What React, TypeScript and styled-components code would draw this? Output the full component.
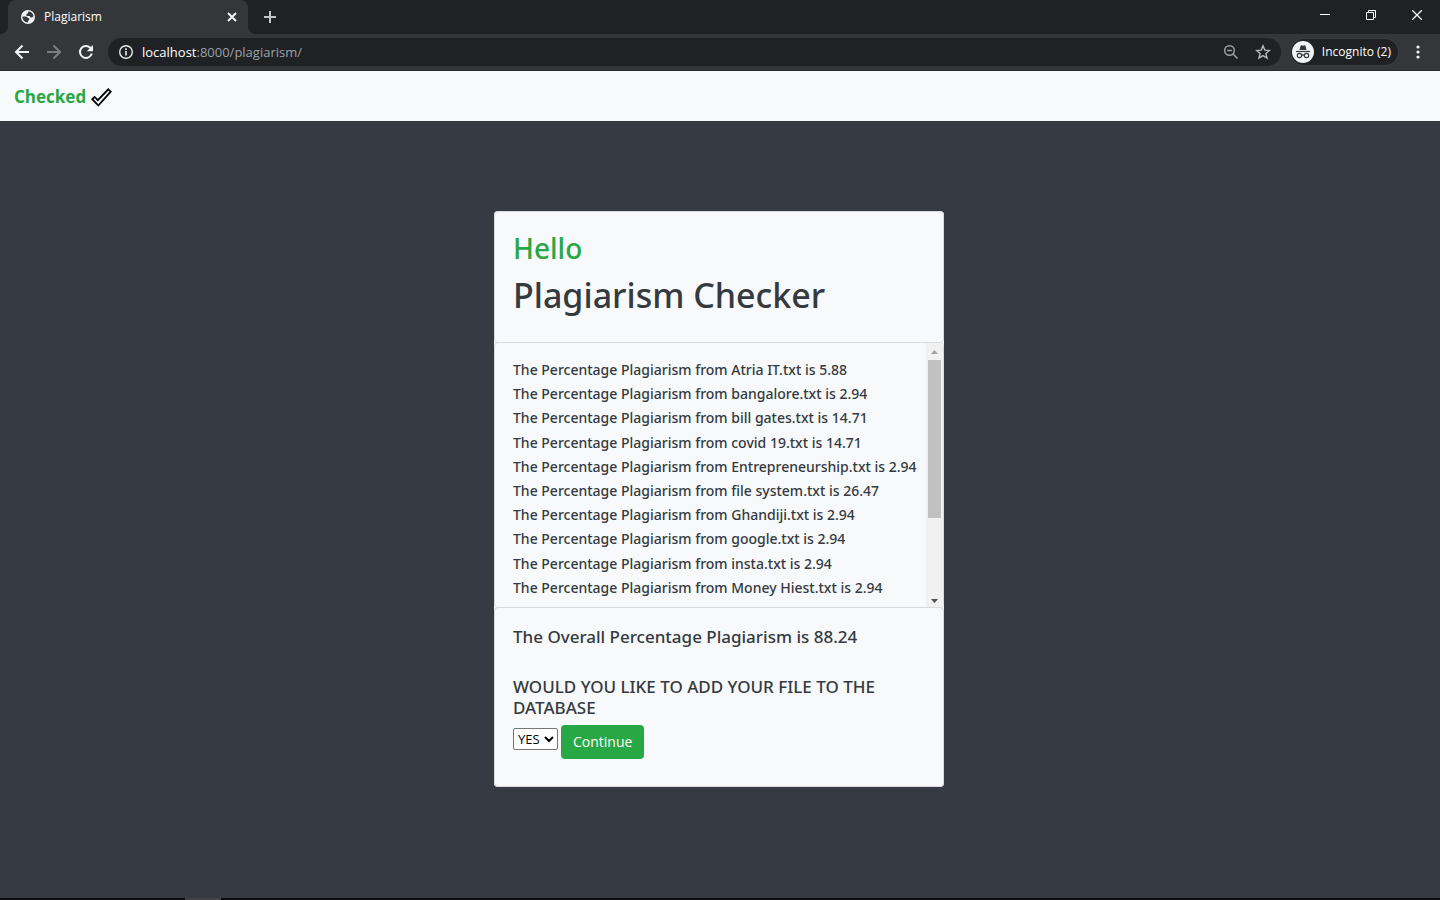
import React from "react";
import styled, { createGlobalStyle } from "styled-components";

const sans = `"Noto Sans", "Open Sans", sans-serif`;
const ui = `"Open Sans", "Noto Sans", sans-serif`;

const GlobalStyle = createGlobalStyle`
  *, *::before, *::after { box-sizing: border-box; }
  body { margin: 0; font-family: ${ui}; background: #363a43; }
  h1, h2, h3, ul { margin: 0; padding: 0; }
  button { font: inherit; color: inherit; border: 0; padding: 0; background: none; cursor: pointer; }
`;

const Window = styled.div`
  min-height: 100vh;
  display: flex;
  flex-direction: column;
`;

const TabStrip = styled.header`
  display: flex;
  align-items: flex-start;
  height: 34px;
  padding-left: 8px;
  background: #202124;
  color: #fff;
`;

const Tab = styled.div`
  position: relative;
  display: flex;
  align-items: center;
  gap: 8px;
  width: 240px;
  height: 34px;
  padding: 0 10px 0 12px;
  border-radius: 8px 8px 0 0;
  background: #35363a;
  font-size: 12px;
  line-height: 16px;

  &::before, &::after {
    content: "";
    position: absolute;
    bottom: 0;
    width: 8px;
    height: 8px;
  }
  &::before { right: 100%; background: radial-gradient(circle at 0 0, transparent 8px, #35363a 8px); }
  &::after { left: 100%; background: radial-gradient(circle at 100% 0, transparent 8px, #35363a 8px); }
`;

const TabTitle = styled.span`
  flex: 1;
`;

const IconButton = styled.button<{ $w: number; $h: number; $tone?: string }>`
  display: flex;
  flex: none;
  align-items: center;
  justify-content: center;
  width: ${(p) => p.$w}px;
  height: ${(p) => p.$h}px;
  color: ${(p) => p.$tone ?? "#f1f3f4"};
`;

const WindowControls = styled.div`
  display: flex;
  margin-left: auto;
`;

const Toolbar = styled.div`
  display: flex;
  align-items: center;
  height: 37px;
  padding: 0 6px;
  background: #35363a;
  border-bottom: 1px solid #28292c;
  color: #fff;
`;

const AddressBar = styled.div`
  display: flex;
  flex: 1;
  align-items: center;
  height: 28px;
  margin: 0 10px 0 6px;
  padding: 0 2px 0 10px;
  border-radius: 14px;
  background: #202124;
`;

const Url = styled.a`
  flex: 1;
  margin-left: 8px;
  color: #9aa0a6;
  font-size: 13px;
  line-height: 20px;
  text-decoration: none;
`;

const Host = styled.span`
  color: #fff;
`;

const Profile = styled.button`
  display: flex;
  align-items: center;
  gap: 8px;
  height: 26px;
  margin-right: 4px;
  padding: 0 7px 0 1px;
  border-radius: 13px;
  background: #202124;
  box-shadow: 0 0 0 1px #3c3d41;
  font-size: 12px;
  line-height: 16px;
  white-space: nowrap;
`;

const NavBar = styled.nav`
  display: flex;
  align-items: center;
  height: 50px;
  padding: 1px 14px 0;
  background: #f8f9fb;
`;

const Brand = styled.a`
  display: flex;
  align-items: center;
  gap: 5px;
  color: #28a745;
  font-size: 17px;
  font-weight: 700;
  line-height: 28px;
  text-decoration: none;
`;

const Main = styled.main`
  display: flex;
  flex: 1;
  align-items: flex-start;
  justify-content: center;
  padding: 90px 16px;
`;

const Card = styled.section`
  width: 450px;
  max-width: 100%;
  margin-right: 2px;
  border-radius: 4px;
  background: #f8f9fb;
  color: #343a40;
  font-family: ${sans};
`;

const Panel = styled.div`
  background: #f8f9fb;
  border: 1px solid #d8dadd;
  border-radius: 4px;

  & + & { margin-top: -1px; }
`;

const Heading = styled(Panel)`
  padding: 16px 18px 23px;
`;

const Greeting = styled.h2`
  color: #28a745;
  font-size: 28px;
  font-weight: 500;
  line-height: 40px;
`;

const Title = styled.h1`
  margin-top: 3px;
  font-size: 34px;
  font-weight: 500;
  line-height: 48px;
`;

const ResultPanel = styled(Panel)`
  display: flex;
  height: 266px;
  overflow: hidden;
`;

const Results = styled.ul`
  display: grid;
  flex: 1;
  grid-auto-rows: 1fr;
  align-items: center;
  height: 242px;
  margin: 15px 0 0 18px;
  list-style: none;
  font-size: 14px;
  font-weight: 500;
  line-height: 24px;
  white-space: nowrap;
`;

const ScrollBar = styled.div`
  display: flex;
  flex: none;
  flex-direction: column;
  align-items: center;
  width: 17px;
  background: #f1f1f1;
`;

const ScrollThumb = styled.div`
  width: 13px;
  height: 158px;
  margin-bottom: auto;
  background: #c1c1c1;
`;

const Footer = styled(Panel)`
  padding: 19px 18px 27px;
`;

const Overall = styled.h3`
  font-size: 17px;
  font-weight: 500;
  line-height: 20px;
`;

const Question = styled.label`
  display: block;
  margin: 29px 0 7px;
  font-size: 17px;
  font-weight: 500;
  line-height: 21px;
`;

const Controls = styled.form`
  display: flex;
  align-items: flex-start;
  gap: 3px;
`;

const Choice = styled.select`
  width: 45px;
  height: 22px;
  margin-top: 3px;
  padding: 0;
  border: 1px solid #767676;
  border-radius: 2px;
  background: #fff;
  color: #000;
  font-family: ${ui};
  font-size: 13px;
`;

const Continue = styled.button`
  height: 34px;
  padding: 0 12px;
  border-radius: 4px;
  background: #28a745;
  color: #fff;
  font-family: ${ui};
  font-size: 14px;
  line-height: 20px;
`;

const TaskBar = styled.footer`
  display: flex;
  height: 2px;
  padding-left: 185px;
  background: #0e0d0c;
`;

const TaskItem = styled.span`
  width: 36px;
  background: #444341;
`;

const rows: [string, string][] = [
  ["Atria IT.txt", "5.88"],
  ["bangalore.txt", "2.94"],
  ["bill gates.txt", "14.71"],
  ["covid 19.txt", "14.71"],
  ["Entrepreneurship.txt", "2.94"],
  ["file system.txt", "26.47"],
  ["Ghandiji.txt", "2.94"],
  ["google.txt", "2.94"],
  ["insta.txt", "2.94"],
  ["Money Hiest.txt", "2.94"],
];

const Stroke = ({ d, size = 16, width = 2 }: { d: string; size?: number; width?: number }) => (
  <svg width={size} height={size} viewBox={`0 0 ${size} ${size}`} fill="none" stroke="currentColor" strokeWidth={width}>
    <path d={d} />
  </svg>
);

const Globe = () => (
  <svg width="16" height="16" viewBox="0 0 16 16">
    <circle cx="8" cy="8" r="7" fill="#f1f3f4" />
    <path
      d="M2.500 7.600C4.500 7.300 6.700 7.300 7.600 8.600c.5.8 1.900.6 1.800 1.700-.1 1-1.400.8-1.400 3.200C4.700 13.500 2.300 11 2.500 7.600zM8.300 2.500c2.300-.2 4.600 1.600 5.100 4.200-.3 1.500-1.400 2.200-2.800 1.700-.6-.3-.5-1.200-1.300-1.300-1.200-.1-2.200.1-2.900-.7-.5-.8.2-1.700 1.200-1.800.8-.1.100-1.200.7-2.100z"
      fill="#35363a"
    />
  </svg>
);

const Incognito = () => (
  <svg width="22" height="22" viewBox="0 0 22 22">
    <circle cx="11" cy="11" r="11" fill="#f1f3f4" />
    <path d="M7.500 9 8.600 4.700q.2-.6.8-.4L11 4.700l1.600-.4q.6-.2.8.4L14.500 9z" fill="#35363a" />
    <path d="M4 10.500h14" stroke="#35363a" strokeWidth="1.200" />
    <g fill="none" stroke="#35363a" strokeWidth="1.200">
      <circle cx="7.500" cy="14.500" r="2.200" />
      <circle cx="14.500" cy="14.500" r="2.200" />
      <path d="M9.700 14.200q1.300-.8 2.600 0" />
    </g>
  </svg>
);

export default function App() {
  return (
    <Window>
      <GlobalStyle />
      <TabStrip>
        <Tab>
          <Globe />
          <TabTitle>Plagiarism</TabTitle>
          <IconButton $w={12} $h={16} aria-label="Close tab">
            <Stroke size={10} d="M1 1l8 8M9 1L1 9" />
          </IconButton>
        </Tab>
        <IconButton $w={44} $h={34} $tone="#c4c6ca" aria-label="New tab">
          <Stroke size={12} d="M6 0v12M0 6h12" />
        </IconButton>
        <WindowControls>
          <IconButton $w={46} $h={29} $tone="#fff" aria-label="Minimize">
            <Stroke size={10} width={1} d="M0 4.500h10" />
          </IconButton>
          <IconButton $w={46} $h={29} $tone="#fff" aria-label="Restore">
            <Stroke size={10} width={1} d="M.5 2.500h7v7h-7zM2.500 2.500v-2h7v7h-2" />
          </IconButton>
          <IconButton $w={46} $h={29} $tone="#fff" aria-label="Close window">
            <Stroke size={10} width={1.3} d="M0 0l10 10M10 0L0 10" />
          </IconButton>
        </WindowControls>
      </TabStrip>
      <Toolbar>
        <IconButton $w={32} $h={32} aria-label="Back">
          <Stroke d="M15 8H2M8.500 1.500L2 8l6.500 6.500" />
        </IconButton>
        <IconButton $w={32} $h={32} $tone="#7c7d80" aria-label="Forward">
          <Stroke d="M1 8h13M7.500 1.500L14 8l-6.500 6.500" />
        </IconButton>
        <IconButton $w={32} $h={32} aria-label="Reload">
          <svg width="16" height="16" viewBox="0 0 16 16">
            <path d="M13.800 9.500A6 6 0 1 1 12.300 3.700L13 4.400" fill="none" stroke="currentColor" strokeWidth="2" />
            <path d="M15 1v6.200H8.800z" fill="currentColor" />
          </svg>
        </IconButton>
        <AddressBar>
          <svg width="16" height="16" viewBox="0 0 16 16" fill="none" stroke="#e8eaed">
            <circle cx="8" cy="8" r="6.300" strokeWidth="1.400" />
            <path d="M8 7v4.500M8 4.300v1.700" strokeWidth="1.600" />
          </svg>
          <Url href="http://localhost:8000/plagiarism/">
            <Host>localhost</Host>:8000/plagiarism/
          </Url>
          <IconButton $w={32} $h={28} $tone="#9aa0a6" aria-label="Zoom">
            <svg width="16" height="16" viewBox="0 0 16 16" fill="none" stroke="currentColor" strokeWidth="1.500">
              <circle cx="6.500" cy="6.500" r="4.800" />
              <path d="M10 10l4.500 4.500M4.200 6.500h4.600" />
            </svg>
          </IconButton>
          <IconButton $w={32} $h={28} $tone="#b4b7bb" aria-label="Bookmark">
            <svg width="16" height="16" viewBox="0 0 16 16" fill="none" stroke="currentColor" strokeWidth="1.400">
              <path d="M8 1.800l1.800 4.300 4.600.4-3.500 3 1.100 4.500L8 11.600l-4 2.400 1.100-4.500-3.500-3 4.600-.4z" />
            </svg>
          </IconButton>
        </AddressBar>
        <Profile>
          <Incognito />
          Incognito (2)
        </Profile>
        <IconButton $w={32} $h={32} aria-label="Menu">
          <svg width="4" height="14" viewBox="0 0 4 14" fill="currentColor">
            <circle cx="2" cy="2" r="1.600" />
            <circle cx="2" cy="7" r="1.600" />
            <circle cx="2" cy="12" r="1.600" />
          </svg>
        </IconButton>
      </Toolbar>
      <NavBar>
        <Brand href="#">
          Checked
          <svg width="21" height="20" viewBox="0 0 21 20" fill="none" stroke="#000" strokeWidth="1.800">
            <path d="M1.300 12.200l2.300-2.300 3.200 3.200L17.300 2.300l2.400 2.400L7.300 18.500z" />
          </svg>
        </Brand>
      </NavBar>
      <Main>
        <Card>
          <Heading>
            <Greeting>Hello</Greeting>
            <Title>Plagiarism Checker</Title>
          </Heading>
          <ResultPanel>
            <Results>
              {rows.map(([file, pct]) => (
                <li key={file}>
                  The Percentage Plagiarism from {file} is {pct}
                </li>
              ))}
            </Results>
            <ScrollBar aria-hidden="true">
              <svg width="17" height="17" viewBox="0 0 17 17">
                <path d="M5 11h7L8.500 7z" fill="#a3a3a3" />
              </svg>
              <ScrollThumb />
              <svg width="17" height="17" viewBox="0 0 17 17">
                <path d="M5 9h7L8.500 13z" fill="#505050" />
              </svg>
            </ScrollBar>
          </ResultPanel>
          <Footer>
            <Overall>The Overall Percentage Plagiarism is 88.24</Overall>
            <Question htmlFor="add">WOULD YOU LIKE TO ADD YOUR FILE TO THE DATABASE</Question>
            <Controls>
              <Choice id="add" defaultValue="YES">
                <option>YES</option>
                <option>NO</option>
              </Choice>
              <Continue type="button">Continue</Continue>
            </Controls>
          </Footer>
        </Card>
      </Main>
      <TaskBar>
        <TaskItem />
      </TaskBar>
    </Window>
  );
}
